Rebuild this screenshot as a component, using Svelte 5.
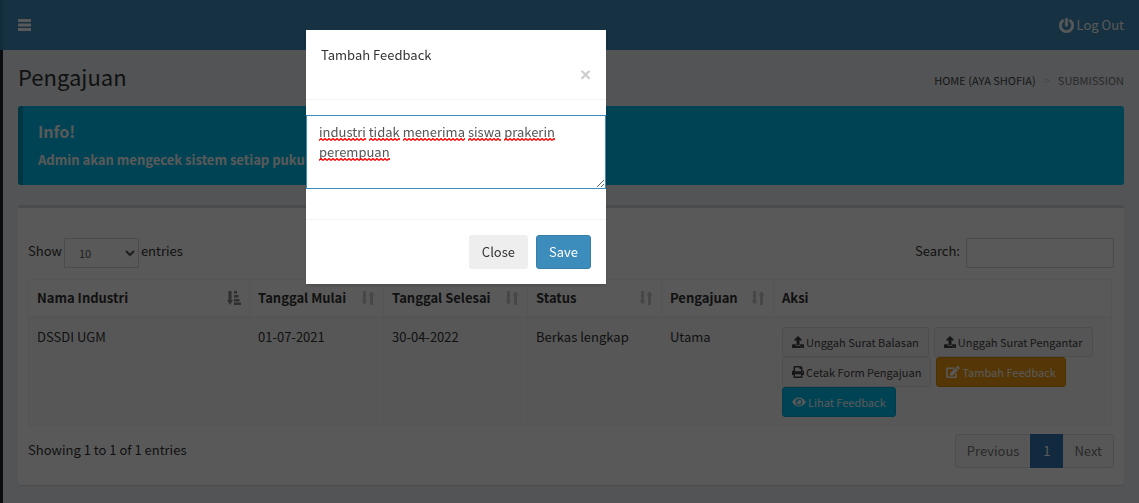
<script lang="ts">
  type Icon = 'bars' | 'power' | 'upload' | 'print' | 'edit' | 'eye';

  const columns = ['Nama Industri', 'Tanggal Mulai', 'Tanggal Selesai', 'Status', 'Pengajuan', 'Aksi'];
  const row = ['DSSDI UGM', '01-07-2021', '30-04-2022', 'Berkas lengkap', 'Utama'];
  const actions: { label: string; icon: Icon; kind: string }[] = [
    { label: 'Unggah Surat Balasan', icon: 'upload', kind: 'default' },
    { label: 'Unggah Surat Pengantar', icon: 'upload', kind: 'default' },
    { label: 'Cetak Form Pengajuan', icon: 'print', kind: 'default' },
    { label: 'Tambah Feedback', icon: 'edit', kind: 'warning' },
    { label: 'Lihat Feedback', icon: 'eye', kind: 'info' },
  ];

  let feedback = $state('industri tidak menerima siswa prakerin perempuan');
  let pageSize = $state('10');
  let query = $state('');
  const words = $derived(feedback.split(/(\s+)/));

  const icons: Record<Icon, { box: string; d: string }> = {
    bars: {
      box: '0 0 13 12',
      d: 'M.5 0h12q.5 0 .5.5v2q0 .5-.5.5H.5Q0 3 0 2.500v-2Q0 0 .5 0zM.5 4.500h12q.5 0 .5.5v2q0 .5-.5.5H.5Q0 7.500 0 7V5q0-.5.5-.5zM.5 9h12q.5 0 .5.5v2q0 .5-.5.5H.5q-.5 0-.5-.5v-2Q0 9 .5 9z',
    },
    power: {
      box: '0 0 512 512',
      d: 'M400 54.100c63 45 104 118.600 104 201.900 0 136.800-110.800 247.700-247.500 248C120 504.300 8.200 393 8 256.400 7.900 173.100 48.900 99.300 111.800 54.200c11.700-8.300 28-4.800 35 7.700L162.600 90c5.900 10.500 3.100 23.800-6.600 31-41.500 30.800-68 79.600-68 134.900-.1 92.300 74.500 168.100 168 168.100 91.600 0 168.600-74.200 168-169.100-.3-51.800-24.700-101.800-68.100-134-9.700-7.200-12.400-20.500-6.500-30.900l15.800-28.100c7-12.400 23.200-16.100 34.800-7.800zM296 264V24c0-13.300-10.700-24-24-24h-32c-13.300 0-24 10.700-24 24v240c0 13.300 10.700 24 24 24h32c13.300 0 24-10.700 24-24z',
    },
    upload: {
      box: '0 0 512 512',
      d: 'M296 384h-80c-13.300 0-24-10.700-24-24V192h-87.700c-17.800 0-26.700-21.500-14.100-34.100L242.300 5.700c7.500-7.500 19.800-7.500 27.300 0l152.200 152.200c12.600 12.600 3.700 34.100-14.100 34.100H320v168c0 13.300-10.700 24-24 24zm216-8v112c0 13.300-10.700 24-24 24H24c-13.300 0-24-10.700-24-24V376c0-13.300 10.700-24 24-24h136v8c0 30.900 25.100 56 56 56h80c30.900 0 56-25.100 56-56v-8h136c13.300 0 24 10.700 24 24zm-124 88c0-11-9-20-20-20s-20 9-20 20 9 20 20 20 20-9 20-20zm64 0c0-11-9-20-20-20s-20 9-20 20 9 20 20 20 20-9 20-20z',
    },
    print: {
      box: '0 0 512 512',
      d: 'M448 192V77.250c0-8.490-3.370-16.620-9.370-22.630L393.370 9.370c-6-6-14.140-9.370-22.630-9.370H96C78.330 0 64 14.330 64 32v160c-35.350 0-64 28.650-64 64v112c0 8.840 7.160 16 16 16h48v96c0 17.670 14.330 32 32 32h320c17.670 0 32-14.330 32-32v-96h48c8.840 0 16-7.160 16-16V256c0-35.350-28.650-64-64-64zm-64 256H128v-96h256v96zm0-224H128V64h192v48c0 8.840 7.160 16 16 16h48v96zm48 72c-13.250 0-24-10.750-24-24 0-13.260 10.750-24 24-24s24 10.740 24 24c0 13.250-10.750 24-24 24z',
    },
    edit: {
      box: '0 0 576 512',
      d: 'M402.600 83.200l90.200 90.200c3.800 3.800 3.800 10 0 13.800L274.400 405.600l-92.800 10.300c-12.400 1.400-22.900-9.100-21.500-21.500l10.300-92.800L388.800 83.200c3.800-3.800 10-3.800 13.800 0zm162-22.900l-48.800-48.800c-15.200-15.200-39.900-15.200-55.200 0l-35.400 35.400c-3.800 3.800-3.800 10 0 13.800l90.200 90.200c3.800 3.800 10 3.800 13.800 0l35.400-35.400c15.200-15.300 15.200-40 0-55.200zM384 346.200V448H64V128h229.800c3.200 0 6.200-1.300 8.500-3.500l40-40c7.600-7.600 2.200-20.500-8.500-20.500H48C21.500 64 0 85.500 0 112v352c0 26.500 21.500 48 48 48h352c26.500 0 48-21.500 48-48V306.200c0-10.700-12.900-16-20.500-8.500l-40 40c-2.200 2.300-3.500 5.300-3.500 8.500z',
    },
    eye: {
      box: '0 0 576 512',
      d: 'M572.520 241.400C518.290 135.590 410.930 64 288 64S57.680 135.640 3.480 241.410a32.350 32.350 0 0 0 0 29.190C57.710 376.410 165.070 448 288 448s230.320-71.640 284.520-177.410a32.350 32.350 0 0 0 0-29.190zM288 400a144 144 0 1 1 144-144 143.930 143.930 0 0 1-144 144zm0-240a95.310 95.310 0 0 0-25.310 3.790 47.850 47.850 0 0 1-66.900 66.900A95.780 95.780 0 1 0 288 160z',
    },
  };
</script>

{#snippet icon(name: Icon)}
  <svg class="icon {name}" viewBox={icons[name].box} aria-hidden="true"><path d={icons[name].d} /></svg>
{/snippet}

<div class="app">
  <aside class="sidebar"></aside>
  <div class="main">
    <header class="navbar">
      <button class="toggle" aria-label="Toggle navigation">{@render icon('bars')}</button>
      <a class="logout" href="#logout">{@render icon('power')} Log Out</a>
    </header>

    <main class="content">
      <div class="heading">
        <h1>Pengajuan</h1>
        <nav class="crumbs" aria-label="Breadcrumb">
          <a href="#home">HOME (AYA SHOFIA)</a>
          <span class="sep">&gt;</span>
          <span class="here">SUBMISSION</span>
        </nav>
      </div>

      <section class="callout">
        <h4>Info!</h4>
        <p>Admin akan mengecek sistem setiap pukul 1</p>
      </section>

      <section class="box">
        <div class="tools">
          <label>Show
            <select bind:value={pageSize}>
              <option>10</option>
              <option>25</option>
              <option>50</option>
            </select>
            entries
          </label>
          <label class="search">Search: <input type="search" bind:value={query} /></label>
        </div>

        <table>
          <thead>
            <tr>
              {#each columns as name, i}
                <th class="c{i}">
                  <div class="th">
                    {name}
                    {#if i === 0}
                      <svg class="sort active" viewBox="0 0 14 14" aria-hidden="true">
                        <path d="M1.500 0h3v9H6l-3 5-3-5h1.500zM7 0h3v2.500H7zM7 4h4.500v2.500H7zM7 8h5.500v2.500H7zM7 11.500h7V14H7z" />
                      </svg>
                    {:else if i < 5}
                      <svg class="sort" viewBox="0 0 14 14" aria-hidden="true">
                        <path d="M2 0h3v9.500h1.500L3.500 14 .5 9.500H2zM9 14h3V4.500h1.500L10.500 0l-3 4.500H9z" />
                      </svg>
                    {/if}
                  </div>
                </th>
              {/each}
            </tr>
          </thead>
          <tbody>
            <tr>
              {#each row as value}
                <td>{value}</td>
              {/each}
              <td>
                <div class="actions">
                  {#each actions as action}
                    <button class="btn small {action.kind}">{@render icon(action.icon)}{action.label}</button>
                  {/each}
                </div>
              </td>
            </tr>
          </tbody>
        </table>

        <div class="foot">
          <span>Showing 1 to 1 of 1 entries</span>
          <div class="pages">
            <button>Previous</button>
            <button class="current" aria-current="page">1</button>
            <button>Next</button>
          </div>
        </div>
      </section>
    </main>
  </div>
</div>

<div class="backdrop">
  <div class="modal" role="dialog" aria-modal="true" aria-labelledby="modal-title">
    <div class="modal-head">
      <div id="modal-title">Tambah Feedback</div>
      <button class="close" aria-label="Close dialog">×</button>
    </div>
    <div class="editor">
      <div class="spelling" aria-hidden="true">{#each words as word}{#if word.trim()}<span data-word={word}></span>{:else}{word}{/if}{/each}</div>
      <textarea aria-label="Feedback" rows="3" spellcheck="false" bind:value={feedback}></textarea>
    </div>
    <div class="modal-foot">
      <button class="btn plain">Close</button>
      <button class="btn primary">Save</button>
    </div>
  </div>
</div>

<style>
  :global(body) {
    background: #ecf0f5;
    overflow: hidden;
  }
  .app, .backdrop {
    font: 13px/20px "Noto Sans CJK SC", "Noto Sans", sans-serif;
    color: #333;
  }
  .app *, .backdrop, .backdrop * {
    box-sizing: border-box;
  }
  button, input, select, textarea {
    font: inherit;
    color: inherit;
    margin: 0;
  }
  a {
    color: inherit;
    text-decoration: none;
  }
  .icon {
    fill: currentColor;
    flex: none;
  }
  .app {
    display: flex;
    min-height: 100vh;
  }
  .sidebar {
    width: 3px;
    background: linear-gradient(#367fa9 50px, #1e282c 50px);
  }
  .main {
    flex: 1;
    min-width: 0;
  }
  .navbar {
    display: flex;
    justify-content: space-between;
    align-items: center;
    height: 50px;
    padding: 0 15px;
    background: #3c8dbc;
    color: #fff;
  }
  .toggle {
    display: flex;
    padding: 0;
    border: 0;
    background: none;
  }
  .bars {
    width: 13px;
    height: 12px;
  }
  .logout {
    display: flex;
    align-items: center;
    gap: 3px;
  }
  .power {
    width: 15px;
    height: 15px;
    stroke: currentColor;
    stroke-width: 20;
  }
  .content {
    padding: 15px;
  }
  .heading {
    display: flex;
    justify-content: space-between;
    align-items: flex-start;
    height: 26px;
    margin-bottom: 15px;
  }
  h1 {
    margin: 0;
    font-size: 22px;
    line-height: 22px;
    font-weight: 400;
  }
  .crumbs {
    display: flex;
    gap: 8px;
    padding-top: 5px;
    font-size: 11px;
  }
  .crumbs a {
    color: #444;
  }
  .sep {
    color: #ccc;
  }
  .here {
    color: #777;
  }
  .callout {
    padding: 15px 30px 15px 15px;
    border-left: 5px solid #0097bc;
    border-radius: 3px;
    background: #00c0ef;
    color: #fff;
    font-weight: 700;
  }
  h4 {
    margin: 0 0 9px;
    font-size: 16px;
    line-height: 20px;
  }
  p {
    margin: 0;
  }
  .box {
    margin-top: 20px;
    padding: 30px 10px 17px;
    border-top: 3px solid #d2d6de;
    border-radius: 3px;
    background: #fff;
    box-shadow: 0 1px 1px rgba(0, 0, 0, 0.1);
  }
  .tools, .foot {
    display: flex;
    justify-content: space-between;
  }
  .tools label {
    display: flex;
    gap: 2px;
    line-height: 26px;
  }
  .tools .search {
    gap: 6px;
  }
  .tools select, .tools input {
    height: 30px;
    border: 1px solid #d2d6de;
    background: #fff;
    color: #555;
    font-size: 11px;
  }
  .tools select {
    width: 75px;
    padding: 0 10px;
  }
  .tools input {
    width: 148px;
    padding: 5px 10px;
  }
  table {
    width: calc(100% - 2px);
    margin: 11px 0 8px;
    border-collapse: collapse;
    table-layout: fixed;
  }
  th, td {
    padding: 8px;
    border: 1px solid #f4f4f4;
    text-align: left;
    vertical-align: top;
  }
  td {
    padding-top: 9px;
  }
  th {
    border-bottom-width: 2px;
  }
  tbody tr {
    background: #f9f9f9;
  }
  .c0 { width: 221px; }
  .c1 { width: 134px; }
  .c2 { width: 144px; }
  .c3 { width: 134px; }
  .c4 { width: 112px; }
  .th {
    display: flex;
    justify-content: space-between;
    align-items: center;
  }
  .sort {
    width: 14px;
    height: 14px;
    fill: #ccc;
  }
  .sort.active {
    fill: #8a8a8a;
  }
  .actions {
    display: flex;
    flex-wrap: wrap;
    column-gap: 5px;
  }
  .btn {
    padding: 6px 12px;
    border: 1px solid transparent;
    border-radius: 3px;
  }
  .small {
    display: flex;
    align-items: center;
    gap: 2px;
    padding: 4px 9px;
    font-size: 11px;
  }
  .small .icon {
    width: 12px;
    height: 12px;
  }
  .small .edit, .small .eye {
    width: 14px;
  }
  .default {
    border-color: #ddd;
    background: #f4f4f4;
    color: #444;
  }
  .warning {
    border-color: #e08e0b;
    background: #f39c12;
    color: #fff;
  }
  .info {
    border-color: #00acd6;
    background: #00c0ef;
    color: #fff;
  }
  .foot > span {
    padding-top: 6px;
  }
  .pages {
    display: flex;
  }
  .pages button {
    min-width: 33px;
    padding: 6px 11px;
    border: 1px solid #ddd;
    background: #fafafa;
    color: #777;
  }
  .pages button:first-child {
    border-right: 0;
    border-radius: 4px 0 0 4px;
  }
  .pages button:last-child {
    border-left: 0;
    border-radius: 0 4px 4px 0;
  }
  .pages .current {
    border-color: #337ab7;
    background: #337ab7;
    color: #fff;
  }
  .backdrop {
    position: fixed;
    inset: 0;
    background: rgba(0, 0, 0, 0.65);
  }
  .modal {
    position: absolute;
    top: 30px;
    left: 306px;
    width: 300px;
    background: #fff;
    box-shadow: 0 2px 3px rgba(0, 0, 0, 0.125);
  }
  .modal-head {
    display: flex;
    flex-direction: column;
    padding: 15px 15px 14px;
    border-bottom: 1px solid #f4f4f4;
  }
  .close {
    align-self: flex-end;
    padding: 0;
    border: 0;
    background: none;
    color: #ccc;
    font: 700 19px/20px "Liberation Sans", sans-serif;
  }
  .editor {
    position: relative;
    display: flex;
    margin: 15px 0 30px;
  }
  textarea, .spelling {
    width: 100%;
    padding: 6px 12px;
    border: 1px solid #3c8dbc;
    line-height: 20px;
  }
  textarea {
    height: 74px;
    background: none;
    color: #555;
    outline: 0;
    resize: vertical;
  }
  /* Lays out the same words behind the textarea to carry the misspelling marks. */
  .spelling {
    position: absolute;
    inset: 0;
    border-color: transparent;
    color: transparent;
    white-space: pre-wrap;
  }
  .spelling span {
    background: url("data:image/svg+xml,%3Csvg xmlns='http://www.w3.org/2000/svg' width='4' height='3'%3E%3Cpath d='M0 2.500L2 .5 4 2.500' fill='none' stroke='%23f00' stroke-width='1.3'/%3E%3C/svg%3E") 0 100% / 4px 3px repeat-x;
  }
  .spelling span::before {
    content: attr(data-word);
  }
  .modal-foot {
    display: flex;
    justify-content: flex-end;
    gap: 8px;
    padding: 15px;
    border-top: 1px solid #f4f4f4;
  }
  .plain {
    background: #eee;
  }
  .primary {
    border-color: #367fa9;
    background: #3c8dbc;
    color: #fff;
  }
</style>
